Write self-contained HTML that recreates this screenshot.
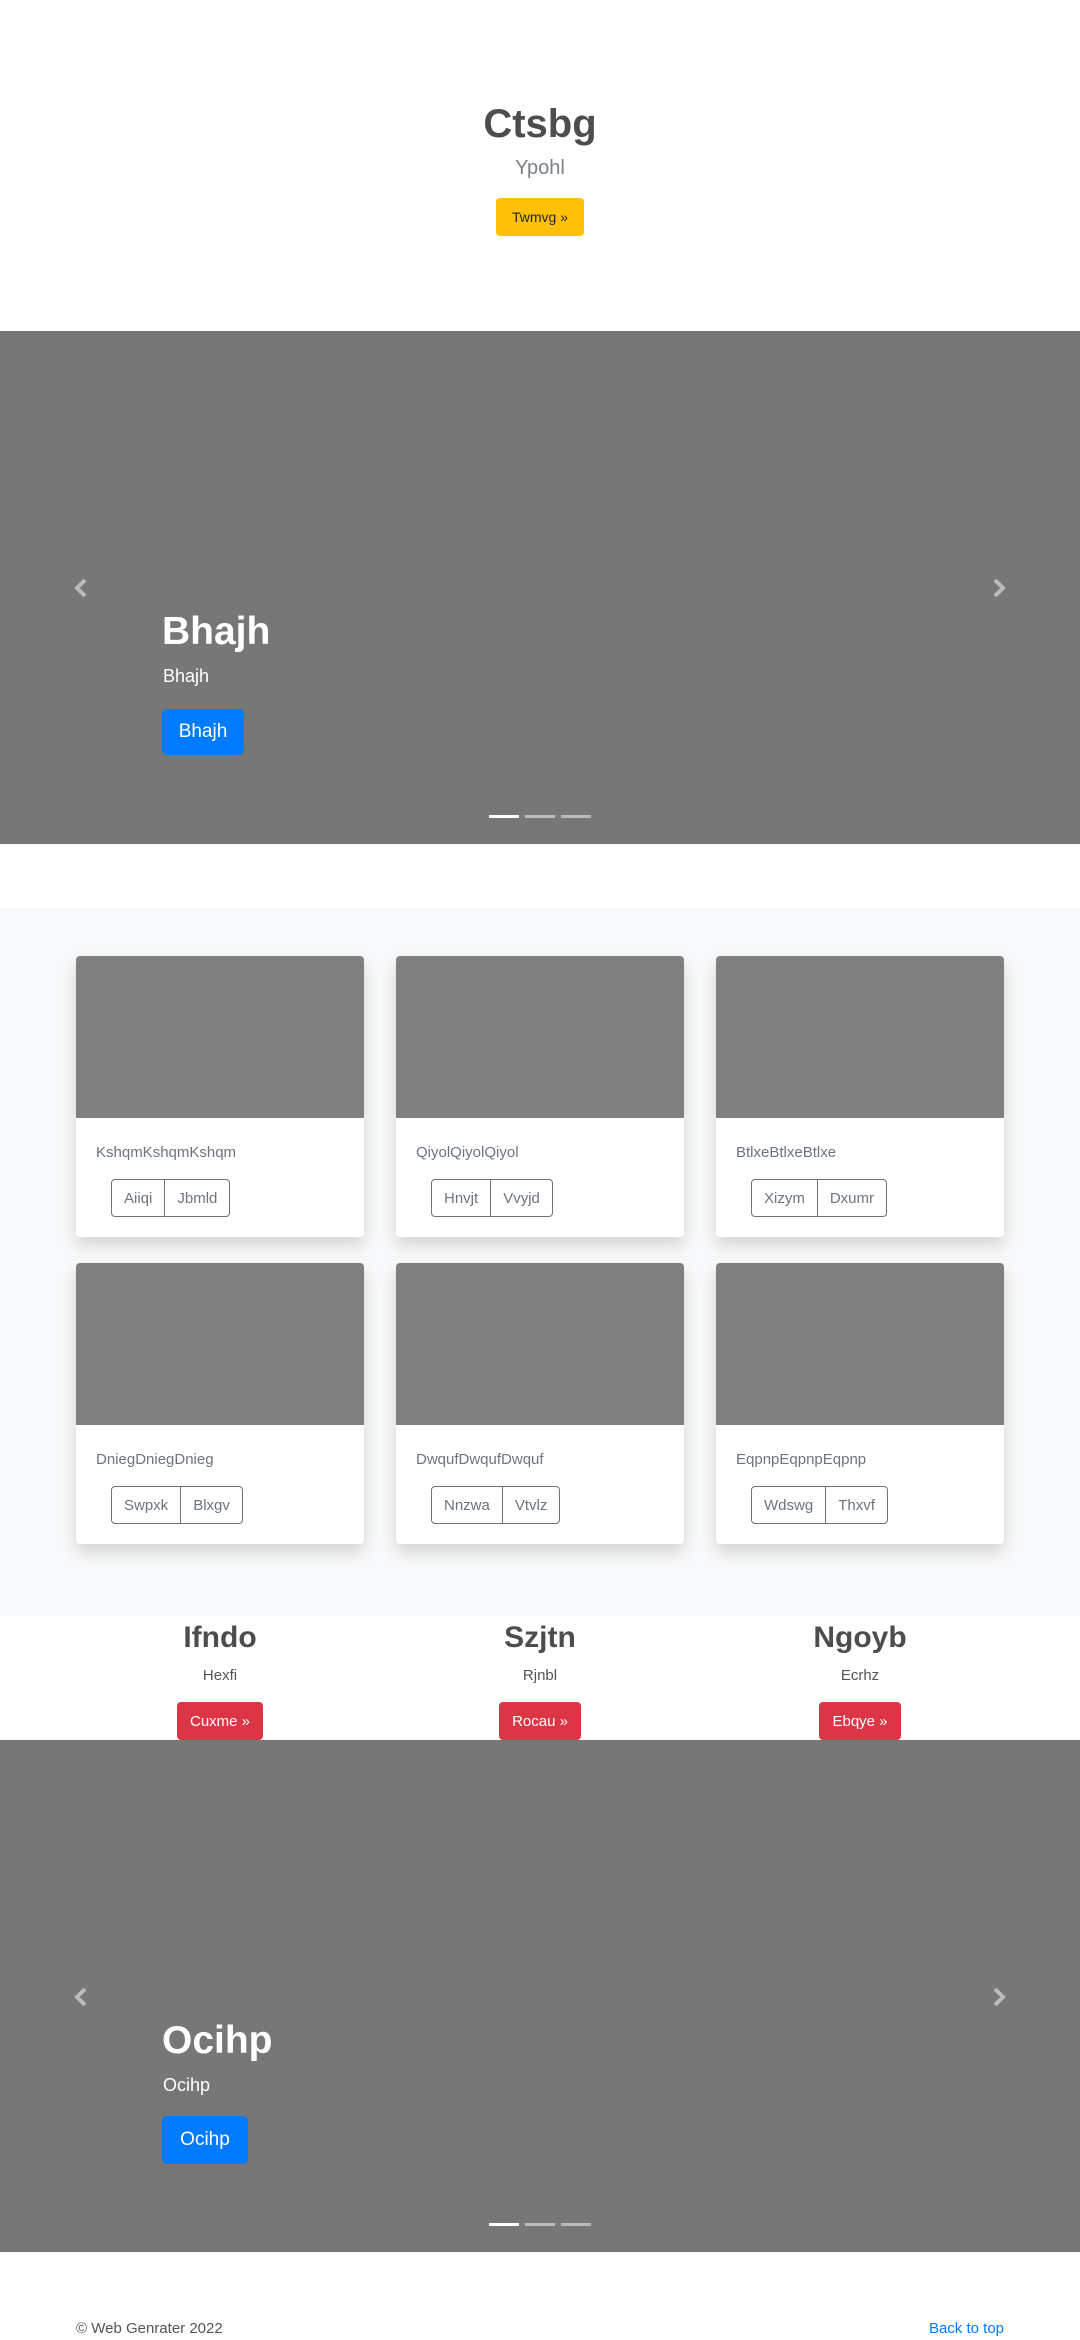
<!DOCTYPE html>
<html><head><meta charset="utf-8"><style>
*{margin:0;padding:0;box-sizing:border-box}
body{width:1080px;height:2340px;position:relative;background:#fff;font-family:"Liberation Sans",sans-serif;overflow:hidden;color:#555}
.a{position:absolute;white-space:nowrap}
.c{text-align:center}
.car{position:absolute;left:0;width:1080px;background:#777}
.btn{position:absolute;display:flex;align-items:center;justify-content:center;border-radius:4px;color:#fff}
.card{position:absolute;width:288px;height:281px;background:#fff;border-radius:4px;box-shadow:0 8px 16px rgba(0,0,0,.15);overflow:hidden}
.card .img{height:162px;background:#808080}
.card .t{position:absolute;left:20px;top:189px;font-size:15px;line-height:15px;color:#6c757d}
.bg{position:absolute;left:35px;top:223px;height:38px;display:flex;border:1px solid #6c757d;border-radius:4px}
.bg span{display:flex;align-items:center;padding:0 12px;font-size:15px;color:#6c757d}
.bg span+span{border-left:1px solid #6c757d}
.ind{position:absolute;height:3px;width:30px;background:rgba(255,255,255,.5)}
</style></head><body>

<div class="a c" style="left:0;width:1080px;top:104px;font-size:40px;line-height:40px;font-weight:bold;color:#4d4d4d">Ctsbg</div>
<div class="a c" style="left:0;width:1080px;top:158px;font-size:20px;line-height:20px;color:#7a8288">Ypohl</div>
<div class="btn" style="left:496px;top:198px;width:88px;height:38px;background:#ffc107;color:#212529;font-size:14px">Twmvg »</div>

<div class="car" style="top:331px;height:513px">
<svg class="a" style="left:72px;top:246px" width="18" height="22" viewBox="0 0 18 22"><path d="M13 3 L5 11 L13 19" fill="none" stroke="#bbb" stroke-width="4"/></svg>
<svg class="a" style="left:990px;top:246px" width="18" height="22" viewBox="0 0 18 22"><path d="M5 3 L13 11 L5 19" fill="none" stroke="#bbb" stroke-width="4"/></svg>
<div class="a" style="left:162px;top:281px;font-size:39px;line-height:40px;font-weight:bold;color:#fff">Bhajh</div>
<div class="a" style="left:163px;top:336px;font-size:18px;line-height:18px;color:#fff">Bhajh</div>
<div class="btn" style="left:162px;top:378px;width:82px;height:46px;background:#007bff;font-size:19px;border-radius:5px">Bhajh</div>
<div class="ind" style="left:489px;top:484px;background:#fff"></div>
<div class="ind" style="left:525px;top:484px"></div>
<div class="ind" style="left:561px;top:484px"></div>
</div>

<div class="a" style="left:0;top:908px;width:1080px;height:708px;background:#f8f9fa"></div>

<div class="card" style="left:76px;top:956px"><div class="img"></div><div class="t">KshqmKshqmKshqm</div><div class="bg"><span>Aiiqi</span><span>Jbmld</span></div></div>
<div class="card" style="left:396px;top:956px"><div class="img"></div><div class="t">QiyolQiyolQiyol</div><div class="bg"><span>Hnvjt</span><span>Vvyjd</span></div></div>
<div class="card" style="left:716px;top:956px"><div class="img"></div><div class="t">BtlxeBtlxeBtlxe</div><div class="bg"><span>Xizym</span><span>Dxumr</span></div></div>
<div class="card" style="left:76px;top:1263px"><div class="img"></div><div class="t">DniegDniegDnieg</div><div class="bg"><span>Swpxk</span><span>Blxgv</span></div></div>
<div class="card" style="left:396px;top:1263px"><div class="img"></div><div class="t">DwqufDwqufDwquf</div><div class="bg"><span>Nnzwa</span><span>Vtvlz</span></div></div>
<div class="card" style="left:716px;top:1263px"><div class="img"></div><div class="t">EqpnpEqpnpEqpnp</div><div class="bg"><span>Wdswg</span><span>Thxvf</span></div></div>

<div class="a c" style="left:60px;width:320px;top:1622px;font-size:30px;line-height:31px;font-weight:bold;color:#4d4d4d">Ifndo</div>
<div class="a c" style="left:380px;width:320px;top:1622px;font-size:30px;line-height:31px;font-weight:bold;color:#4d4d4d">Szjtn</div>
<div class="a c" style="left:700px;width:320px;top:1622px;font-size:30px;line-height:31px;font-weight:bold;color:#4d4d4d">Ngoyb</div>
<div class="a c" style="left:60px;width:320px;top:1668px;font-size:15px;line-height:15px">Hexfi</div>
<div class="a c" style="left:380px;width:320px;top:1668px;font-size:15px;line-height:15px">Rjnbl</div>
<div class="a c" style="left:700px;width:320px;top:1668px;font-size:15px;line-height:15px">Ecrhz</div>
<div class="btn" style="left:177px;top:1702px;width:86px;height:38px;background:#dc3545;font-size:15px">Cuxme »</div>
<div class="btn" style="left:499px;top:1702px;width:82px;height:38px;background:#dc3545;font-size:15px">Rocau »</div>
<div class="btn" style="left:819px;top:1702px;width:82px;height:38px;background:#dc3545;font-size:15px">Ebqye »</div>

<div class="car" style="top:1740px;height:512px">
<svg class="a" style="left:72px;top:246px" width="18" height="22" viewBox="0 0 18 22"><path d="M13 3 L5 11 L13 19" fill="none" stroke="#bbb" stroke-width="4"/></svg>
<svg class="a" style="left:990px;top:246px" width="18" height="22" viewBox="0 0 18 22"><path d="M5 3 L13 11 L5 19" fill="none" stroke="#bbb" stroke-width="4"/></svg>
<div class="a" style="left:162px;top:281px;font-size:39px;line-height:40px;font-weight:bold;color:#fff">Ocihp</div>
<div class="a" style="left:163px;top:336px;font-size:18px;line-height:18px;color:#fff">Ocihp</div>
<div class="btn" style="left:162px;top:376px;width:86px;height:48px;background:#007bff;font-size:19px;border-radius:5px">Ocihp</div>
<div class="ind" style="left:489px;top:483px;background:#fff"></div>
<div class="ind" style="left:525px;top:483px"></div>
<div class="ind" style="left:561px;top:483px"></div>
</div>

<div class="a" style="left:76px;top:2321px;font-size:15px;line-height:15px;color:#555">© Web Genrater 2022</div>
<div class="a" style="right:76px;top:2321px;font-size:15px;line-height:15px;color:#007bff">Back to top</div>
</body></html>
